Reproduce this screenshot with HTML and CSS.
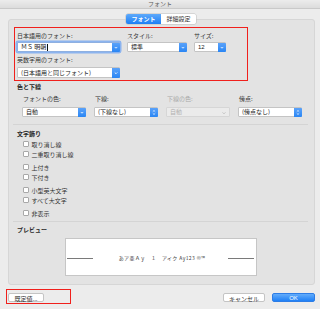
FILE: index.html
```html
<!DOCTYPE html>
<html lang="ja">
<head>
<meta charset="utf-8">
<title>フォント</title>
<link rel="stylesheet" href="styles.css">
</head>
<body>
<div class="titlebar">フォント</div>
<div class="tabs-wrap">
  <div class="tabs"><span class="tab active">フォント</span><span class="tab">詳細設定</span></div>
</div>
<div class="panel">
  <div class="fontbox">
    <div class="row3">
      <div class="field f-jp">
        <div class="lbl">日本語用のフォント:</div>
        <div class="ctl focus"><span class="val">ＭＳ 明朝</span><span class="cursor"></span><span class="bbtn"><svg viewBox="0 0 8 10" width="8" height="10"><path d="M2.6 4.4 L4 5.8 L5.4 4.4" fill="none" stroke="#fff" stroke-width="0.9"/></svg></span></div>
      </div>
      <div class="field f-style">
        <div class="lbl">スタイル:</div>
        <div class="ctl"><span class="val">標準</span><span class="bbtn"><svg viewBox="0 0 8 10" width="8" height="10"><path d="M2.6 4.4 L4 5.8 L5.4 4.4" fill="none" stroke="#fff" stroke-width="0.9"/></svg></span></div>
      </div>
      <div class="field f-size">
        <div class="lbl">サイズ:</div>
        <div class="ctl"><span class="val lat">12</span><span class="bbtn"><svg viewBox="0 0 8 10" width="8" height="10"><path d="M2.6 4.4 L4 5.8 L5.4 4.4" fill="none" stroke="#fff" stroke-width="0.9"/></svg></span></div>
      </div>
    </div>
    <div class="field f-jp">
      <div class="lbl lbl2">英数字用のフォント:</div>
      <div class="ctl ctl2"><span class="val">(日本語用と同じフォント)</span><span class="bbtn"><svg viewBox="0 0 8 11" width="8" height="11"><path d="M2.6 4.9 L4 6.3 L5.4 4.9" fill="none" stroke="#fff" stroke-width="0.9"/></svg></span></div>
    </div>
  </div>

  <div class="sect">色と下線</div>
  <div class="row4">
    <div class="field w4">
      <div class="lbl">フォントの色:</div>
      <div class="ctl"><span class="val">自動</span><span class="bbtn"><svg viewBox="0 0 8 10" width="8" height="10"><path d="M2.6 4.4 L4 5.8 L5.4 4.4" fill="none" stroke="#fff" stroke-width="0.9"/></svg></span></div>
    </div>
    <div class="field w4">
      <div class="lbl">下線:</div>
      <div class="ctl"><span class="val">(下線なし)</span><span class="bbtn"><svg viewBox="0 0 8 10" width="8" height="10"><path d="M2.7 4 L4 2.8 L5.3 4 M2.7 6 L4 7.2 L5.3 6" fill="none" stroke="#fff" stroke-width="0.8"/></svg></span></div>
    </div>
    <div class="field w4">
      <div class="lbl dim">下線の色:</div>
      <div class="ctl disabled"><span class="val">自動</span><svg class="dchev" viewBox="0 0 8 10" width="8" height="10"><path d="M2.6 4.4 L4 5.8 L5.4 4.4" fill="none" stroke="#b5b5b5" stroke-width="0.8"/></svg></div>
    </div>
    <div class="field w4">
      <div class="lbl">傍点:</div>
      <div class="ctl"><span class="val">(傍点なし)</span><span class="bbtn"><svg viewBox="0 0 8 10" width="8" height="10"><path d="M2.7 4 L4 2.8 L5.3 4 M2.7 6 L4 7.2 L5.3 6" fill="none" stroke="#fff" stroke-width="0.8"/></svg></span></div>
    </div>
  </div>

  <div class="sep"></div>
  <div class="sect sect2">文字飾り</div>
  <div class="checks">
    <div class="group">
      <label class="chk"><span class="box"></span>取り消し線</label>
      <label class="chk"><span class="box"></span>二重取り消し線</label>
    </div>
    <div class="group">
      <label class="chk"><span class="box"></span>上付き</label>
      <label class="chk"><span class="box"></span>下付き</label>
    </div>
    <div class="group">
      <label class="chk"><span class="box"></span>小型英大文字</label>
      <label class="chk"><span class="box"></span>すべて大文字</label>
    </div>
    <div class="group">
      <label class="chk"><span class="box"></span>非表示</label>
    </div>
  </div>
  <div class="sep sep2"></div>
  <div class="sect sect3">プレビュー</div>
  <div class="preview">
    <span class="pline"></span>
    <span class="ptext">あア亜Ａｙ　１　アイク Ay123 ©™</span>
    <span class="pline"></span>
  </div>
</div>
<div class="footer">
  <div class="defbox"><span class="pbtn def">既定値...</span></div>
  <div class="right">
    <span class="pbtn cancel">キャンセル</span>
    <span class="pbtn ok">OK</span>
  </div>
</div>
</body>
</html>
```

FILE: styles.css
```css
* { box-sizing: border-box; }
html, body { margin: 0; padding: 0; }
body {
  width: 320px;
  height: 309px;
  overflow: hidden;
  background: #ececec;
  font-family: "Noto Sans CJK JP", "Noto Sans", sans-serif;
  font-size: 6px;
  color: #2e2e2e;
}

.titlebar {
  height: 9px;
  line-height: 8px;
  text-align: center;
  color: #5a5a5a;
  background: linear-gradient(#ececec, #dcdcdc);
  border-bottom: 1px solid #c9c9c9;
  font-size: 6px;
}

.tabs-wrap {
  display: flex;
  justify-content: center;
  padding-left: 2px;
  margin-top: 5px;
  margin-bottom: -5px;
  position: relative;
  z-index: 1;
}
.tabs {
  display: flex;
  height: 10px;
  border-radius: 2px;
  box-shadow: 0 0 0 0.5px #bdbdbd;
  overflow: hidden;
}
.tab {
  width: 35px;
  line-height: 10px;
  text-align: center;
  background: #fff;
  color: #333;
}
.tab.active {
  background: linear-gradient(#5ea9fb, #1d7ff6);
  color: #fff;
  font-weight: 700;
}

.panel {
  margin-left: 8px;
  width: 307px;
  height: 266px;
  background: #e3e3e3;
  border: 1px solid #d6d6d6;
  border-radius: 3px;
  padding-top: 7px;
}

.fontbox {
  margin-left: 5px;
  width: 234px;
  height: 54px;
  border: 1px solid #f0201c;
  padding: 4px 0 0 2px;
}
.row3 { display: flex; gap: 7px; }
.f-jp { width: 103px; }
.f-style { width: 60px; }
.f-size { width: 32px; }

.lbl {
  height: 8px;
  line-height: 8px;
  white-space: nowrap;
  color: #333;
}
.lbl.dim { color: #a9a9a9; }
.lbl2 { margin-top: 4px; }

.ctl {
  position: relative;
  margin-top: 2px;
  height: 10px;
  background: #fff;
  border: 0.5px solid #c4c4c4;
  border-radius: 1px;
  display: flex;
  align-items: center;
  padding-left: 3px;
  white-space: nowrap;
}
.ctl2 { margin-top: 3px; height: 11px; }
.ctl.focus {
  box-shadow: 0 0 0 1.5px #8cb4ef;
  border-color: #8fb0e0;
}
.val {
  line-height: 8px;
  color: #222;
}
.val.lat { font-family: "Liberation Sans", sans-serif; }
.cursor {
  width: 0.7px;
  height: 7px;
  background: #111;
  margin-left: 0.5px;
}
.bbtn {
  position: absolute;
  right: -0.5px;
  top: -0.5px;
  bottom: -0.5px;
  width: 8px;
  background: linear-gradient(#5aa2fa, #2a86f4);
  border-radius: 0 1px 1px 0;
  display: flex;
}
.bbtn svg { display: block; width: 8px; height: 100%; }

.sect {
  margin: 2px 0 0 8px;
  line-height: 8px;
  height: 8px;
  font-weight: 700;
  color: #2a2a2a;
}
.sect2 { margin-top: 5px; }
.sect3 { margin-top: 4px; }

.row4 {
  display: flex;
  gap: 8px;
  margin: 4px 0 0 13px;
}
.w4 { width: 64px; }
.row4 .lbl { padding-left: 1px; }
.row4 .ctl { margin-top: 4px; }
.ctl.disabled {
  background: #ebebeb;
  border-color: #d6d6d6;
}
.ctl.disabled .val { color: #b0b0b0; }
.dchev { position: absolute; right: 1px; top: 0; }

.sep {
  margin: 7px 0 0 4px;
  width: 295px;
  height: 1px;
  background: #d4d4d4;
}
.sep2 { margin-top: 3px; }

.checks { margin: 1px 0 0 14px; }
.group + .group { margin-top: 3px; }
.chk {
  display: flex;
  align-items: center;
  height: 10px;
  color: #333;
}
.box {
  width: 6px;
  height: 6px;
  background: #fff;
  border: 0.5px solid #a8a8a8;
  border-radius: 1px;
  margin-right: 2.5px;
}

.preview {
  margin: 4px 0 0 56px;
  width: 192px;
  height: 38px;
  background: #fff;
  border: 1px solid #c6c6c6;
  display: flex;
  align-items: center;
  justify-content: space-between;
  padding: 0 2px 0 1px;
}
.pline {
  width: 26px;
  height: 1px;
  background: #7a7a7a;
  margin-top: 2px;
}
.ptext {
  font-size: 5px;
  letter-spacing: 0.4px;
  color: #444;
  white-space: nowrap;
  margin-left: 3px;
}

.footer {
  display: flex;
  justify-content: space-between;
  margin-top: 4px;
  padding: 0 5px 0 6px;
}
.defbox {
  width: 65px;
  height: 15px;
  border: 1px solid #f0201c;
  padding: 3px 0 0 1px;
}
.right {
  display: flex;
  gap: 7px;
  margin-top: 4px;
}
.pbtn {
  display: block;
  height: 9px;
  line-height: 9px;
  text-align: center;
  background: #fff;
  border: 0.5px solid #c4c4c4;
  border-radius: 2px;
  color: #333;
}
.def { width: 36px; }
.cancel { width: 42px; }
.ok {
  width: 43px;
  background: linear-gradient(#62acfb, #1f80f6);
  border-color: #2d7de6;
  color: #fff;
  font-family: "Liberation Sans", sans-serif;
}
```
